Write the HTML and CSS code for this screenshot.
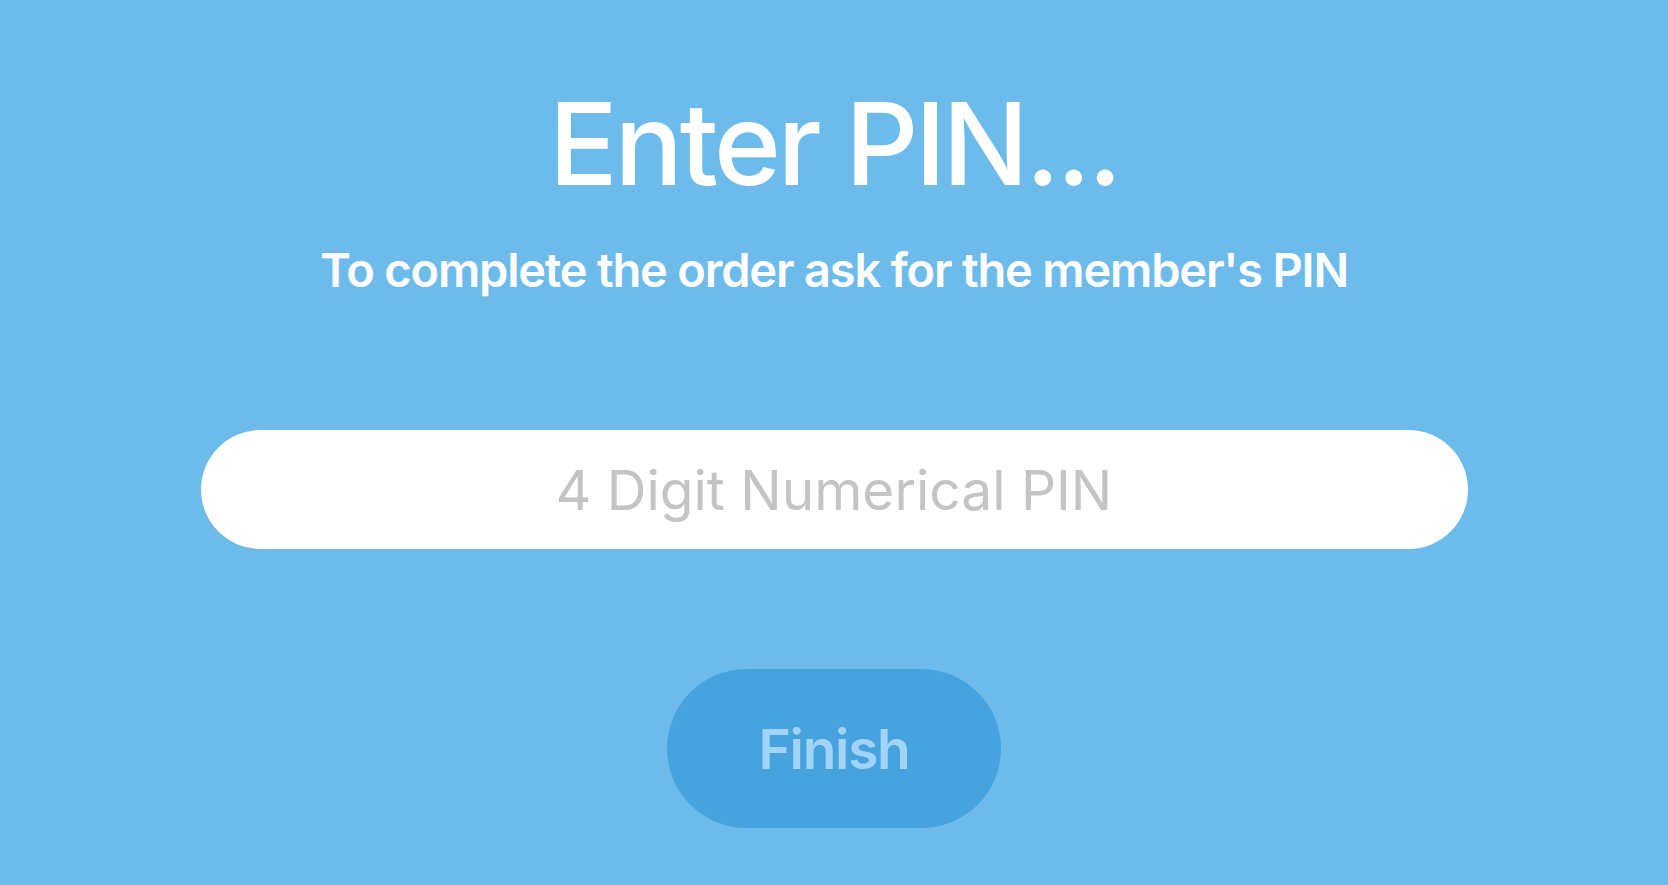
FILE: index.html
```html
<!DOCTYPE html>
<html lang="en">
<head>
<meta charset="utf-8">
<title>Enter PIN</title>
<link rel="stylesheet" href="styles.css">
</head>
<body>
<main class="screen">
  <h1 class="title">Enter PIN...</h1>
  <p class="subtitle">To complete the order ask for the member's PIN</p>
  <input class="pin-input" type="text" placeholder="4 Digit Numerical PIN">
  <button class="finish-btn" type="button">Finish</button>
</main>
</body>
</html>
```
FILE: styles.css
```css
html, body {
  margin: 0;
  padding: 0;
  height: 100%;
}
body {
  background: #6dbbeb;
  font-family: Inter, "Noto Sans", "Liberation Sans", sans-serif;
  overflow: hidden;
}
.screen {
  display: flex;
  flex-direction: column;
  align-items: center;
  padding-top: 87px;
}
.title {
  margin: 0;
  font-size: 114px;
  font-weight: 500;
  line-height: 1;
  color: #ffffff;
  letter-spacing: -3.4px;
}
.subtitle {
  margin: 45px 0 0;
  font-size: 47px;
  font-weight: 600;
  line-height: 1;
  color: #ffffff;
  letter-spacing: -1.2px;
}
.pin-input {
  box-sizing: border-box;
  margin-top: 137px;
  width: 1267px;
  height: 119px;
  border: none;
  outline: none;
  border-radius: 60px;
  background: #ffffff;
  font-family: inherit;
  font-size: 55px;
  font-weight: 400;
  text-align: center;
  color: #333;
  padding: 0 60px;
}
.pin-input::placeholder {
  color: #c4c4c6;
  opacity: 1;
}
.finish-btn {
  box-sizing: border-box;
  margin-top: 120px;
  width: 334px;
  height: 159px;
  border: none;
  border-radius: 80px;
  background: #46a3de;
  color: #a2d3f8;
  font-family: inherit;
  font-size: 55px;
  font-weight: 600;
  letter-spacing: -1.3px;
  padding: 0;
}
```
